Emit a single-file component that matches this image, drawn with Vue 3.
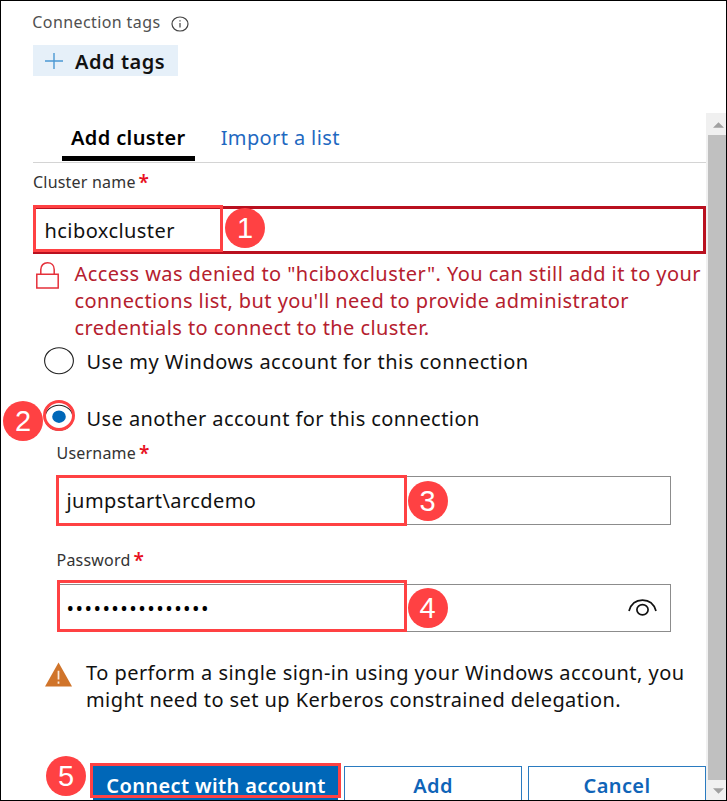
<script setup>
import { ref } from 'vue'

const tabs = ['Add cluster', 'Import a list']
const activeTab = ref(0)
const account = ref('other')
const password = '•'.repeat(16)
</script>

<template>
  <main class="frame">
    <section class="tags">
      <div class="label tags-label">
        <span>Connection tags</span>
        <svg class="info" viewBox="0 0 18 16">
          <ellipse cx="9" cy="8" rx="8" ry="7" />
          <path d="M9 7v4.6M9 4.2v1.3" />
        </svg>
      </div>
      <button class="add-tags">
        <svg viewBox="0 0 18 16"><path d="M0 8h18M9 0v16" /></svg>
        <span>Add tags</span>
      </button>
    </section>

    <div class="body">
      <section class="form">
        <nav class="tabs">
          <button
            v-for="(tab, i) in tabs"
            :key="tab"
            class="tab"
            :class="{ active: i === activeTab }"
            @click="activeTab = i"
          >{{ tab }}</button>
        </nav>

        <div class="label cluster-label">Cluster name<b>*</b></div>
        <div class="field cluster-field">
          hciboxcluster
          <i class="mark mark-1"></i><em class="badge badge-1">1</em>
        </div>

        <div class="error">
          <svg class="lock" viewBox="0 0 23 27">
            <path d="M0.8 12.3h21.4v13.6H0.8zM4.8 12.3V7.5C4.8 3.5 7.6 0.8 11.5 0.8s6.7 2.7 6.7 6.7v4.8" />
          </svg>
          <p>
            Access was denied to "hciboxcluster". You can still add it to your<br />
            connections list, but you'll need to provide administrator<br />
            credentials to connect to the cluster.
          </p>
        </div>

        <div class="radio radio-own" @click="account = 'own'">
          <svg viewBox="0 0 30 28">
            <ellipse class="ring" cx="15" cy="13.7" rx="14.4" ry="13" />
            <ellipse v-if="account === 'own'" class="dot" cx="15" cy="13.7" rx="6.8" ry="6.2" />
          </svg>
          <span>Use my Windows account for this connection</span>
        </div>
        <div class="radio radio-other" @click="account = 'other'">
          <svg viewBox="0 0 30 28">
            <ellipse class="ring" cx="15" cy="13.7" rx="14" ry="12.5" />
            <ellipse v-if="account === 'other'" class="dot" cx="15" cy="12.7" rx="6.8" ry="6.2" />
          </svg>
          <span>Use another account for this connection</span>
          <i class="mark mark-2"></i><em class="badge badge-2">2</em>
        </div>

        <div class="credentials">
          <div class="label user-label">Username<b>*</b></div>
          <div class="field user-field">
            jumpstart\arcdemo
            <i class="mark mark-3"></i><em class="badge badge-3">3</em>
          </div>
          <div class="label pass-label">Password<b>*</b></div>
          <div class="field pass-field">
            <span class="dots">{{ password }}</span>
            <svg class="eye" viewBox="0 0 29 18">
              <path d="M1 12C3 5 8 1.2 14.5 1.2S26 5 28 12" />
              <ellipse cx="14.5" cy="10.8" rx="5.6" ry="5.1" />
            </svg>
            <i class="mark mark-4"></i><em class="badge badge-4">4</em>
          </div>
        </div>

        <div class="warning">
          <svg viewBox="0 0 28 25">
            <path class="tri" d="M14 0 28 25H0z" />
            <path class="bang" d="M14 8.5v9.3M14 19.8v2.2" />
          </svg>
          <p>
            To perform a single sign-in using your Windows account, you<br />
            <span class="tight">might need to set up Kerberos constrained delegation.</span>
          </p>
        </div>

        <footer class="actions">
          <button class="btn primary">
            Connect with account
            <i class="mark mark-5"></i><em class="badge badge-5">5</em>
          </button>
          <button class="btn">Add</button>
          <button class="btn">Cancel</button>
        </footer>
      </section>

      <aside class="scrollbar">
        <svg viewBox="0 0 12 6"><path d="M6 0 12 6H0z" /></svg>
        <div class="thumb"></div>
        <svg viewBox="0 0 12 6"><path d="M0 0h12L6 6z" /></svg>
      </aside>
    </div>
  </main>
</template>

<style scoped>
.frame {
  box-sizing: border-box;
  width: 727px;
  height: 801px;
  border: 1px solid #000;
  background: #fff;
  overflow: hidden;
  display: flex;
  flex-direction: column;
  color: #111;
  font: 20px/27px "Noto Sans", "Open Sans", sans-serif;
  letter-spacing: 0.43px;
  white-space: nowrap;
}
button {
  font: inherit;
  letter-spacing: inherit;
  color: inherit;
  margin: 0;
  padding: 0;
  border: 0;
  background: none;
}
svg { display: block; flex: none; fill: none; overflow: visible; }
p { margin: 0; }

.label {
  font-size: 16px;
  line-height: 20px;
  height: 20px;
  letter-spacing: 0.2px;
  color: #333;
}
.label b {
  display: inline-block;
  margin-left: 3px;
  color: #e81123;
  font-size: 19px;
  line-height: 18px;
  height: 18px;
  vertical-align: -1px;
  font-weight: 600;
}

.tags {
  box-sizing: border-box;
  flex: none;
  height: 112px;
  padding: 11px 0 0 32px;
}
.tags-label { display: flex; align-items: center; gap: 11px; margin-left: -0.7px; letter-spacing: 0.4px; color: #505050; }
.info { width: 18px; height: 16px; margin-top: 3px; stroke: #444; stroke-width: 1.2; }
.add-tags {
  display: flex;
  align-items: center;
  gap: 12px;
  width: 145px;
  height: 31px;
  margin-top: 13px;
  padding-left: 12px;
  background: #e6f0f9;
  font-weight: 600;
  letter-spacing: 0.55px;
}
.add-tags svg { width: 18px; height: 16px; stroke: #4b98d3; stroke-width: 1.4; }
.add-tags span { padding-top: 1px; }

.body { flex: none; display: flex; height: 687px; }
.form { width: 673px; padding: 1px 0 0 32px; }

.tabs {
  display: flex;
  gap: 17px;
  height: 48px;
  padding-left: 29px;
  border-bottom: 1px solid #d4d4d4;
}
.tab { position: relative; height: 47px; line-height: 48px; padding: 0 9px; color: #1f69c1; letter-spacing: 0.38px; }
.tab.active { color: #000; font-weight: 600; }
.tab.active::after {
  content: "";
  position: absolute;
  left: 0;
  right: 0;
  bottom: 0;
  height: 5px;
  background: #000;
}

.field {
  position: relative;
  box-sizing: border-box;
  display: flex;
  align-items: center;
  border: 1px solid #8c8c8c;
}
.cluster-label { margin-top: 9px; }
.cluster-field {
  height: 48px;
  margin-top: 14px;
  padding: 1px 0 0 8.5px;
  border: 3px solid #b9101f;
}

.error { display: flex; margin-top: 6px; color: #b5202e; line-height: 26.8px; }
.error p { margin: 1px 0 -1px 16px; }
.lock { width: 23px; height: 27px; margin: 2px 0 0 2.5px; stroke: #e5303a; stroke-width: 1.5; }

.radio { position: relative; display: flex; align-items: center; gap: 12.5px; height: 30px; padding-left: 11px; }
.radio svg { width: 30px; height: 28px; }
.radio span { padding-top: 1px; }
.ring { stroke: #222; stroke-width: 1.1; }
.dot { fill: #0067b8; }
.radio-own { margin-top: 6px; letter-spacing: 0.5px; }
.radio-other { margin-top: 26.5px; }

.credentials { width: 614px; padding-left: 23.5px; }
.user-label { margin-top: 10.5px; }
.user-field { height: 49px; margin-top: 12.5px; padding: 1px 0 0 9px; }
.pass-label { margin-top: 25px; }
.pass-field { height: 48px; margin-top: 14px; padding: 0 12.5px 0 9px; justify-content: space-between; }
.dots { font: 20px/20px "Noto Sans", sans-serif; letter-spacing: 1.45px; color: #000; padding-top: 3px; }
.eye { width: 29px; height: 18px; stroke: #111; stroke-width: 1.7; }

.warning { display: flex; margin-top: 28px; padding-left: 12px; line-height: 26.8px; letter-spacing: 0.46px; }
.warning svg { width: 27px; height: 25px; margin: 2px 14px 0 0; }
.tight { letter-spacing: 0.41px; }
.tri { fill: #d0742a; }
.bang { stroke: #fbeadb; stroke-width: 1.8; }

.actions { display: flex; gap: 6px; margin: 52.5px 0 0 60px; }
.btn {
  position: relative;
  box-sizing: border-box;
  width: 178px;
  height: 40px;
  flex: none;
  border: 1px solid #2a7bc0;
  color: #0f64b8;
  font-weight: 600;
  line-height: 38px;
  letter-spacing: 0.38px;
}
.btn.primary { width: 245px; padding-left: 1px; background: #0067b8; border-color: #0067b8; color: #fff; }

.mark {
  position: absolute;
  box-sizing: border-box;
  border: 3px solid #ff4143;
}
.badge {
  position: absolute;
  width: 40px;
  height: 40px;
  border-radius: 50%;
  background: #ff4143;
  color: #fff;
  font: 29px/41px "Liberation Sans", Arial, sans-serif;
  letter-spacing: 0;
  text-align: center;
}
.mark-1 { left: -3px; top: -4px; width: 190px; height: 47px; }
.badge-1 { left: 189px; top: -1px; }
.mark-2 { left: 10px; top: -3px; width: 32px; height: 31px; border-radius: 50%; }
.badge-2 { left: -30px; top: -2px; }
.mark-3 { left: -2px; top: -2px; width: 351px; height: 51px; }
.badge-3 { left: 350px; top: 4px; }
.mark-4 { left: -1px; top: -5px; width: 350px; height: 52px; }
.badge-4 { left: 350px; top: 3px; }
.mark-5 { left: -4px; top: -4px; width: 251px; height: 35px; }
.badge-5 { left: -48px; top: -11px; }

.scrollbar {
  box-sizing: border-box;
  width: 20px;
  height: 687px;
  padding: 9px 0 6px 2px;
  background: #f0f0f0;
  display: flex;
  flex-direction: column;
  align-items: center;
}
.scrollbar svg { width: 11px; height: 6px; margin-left: 3px; fill: #a0a0a0; }
.thumb { align-self: stretch; flex: 1; margin: 7px 0 8px; background: #c0c0c0; }
</style>
